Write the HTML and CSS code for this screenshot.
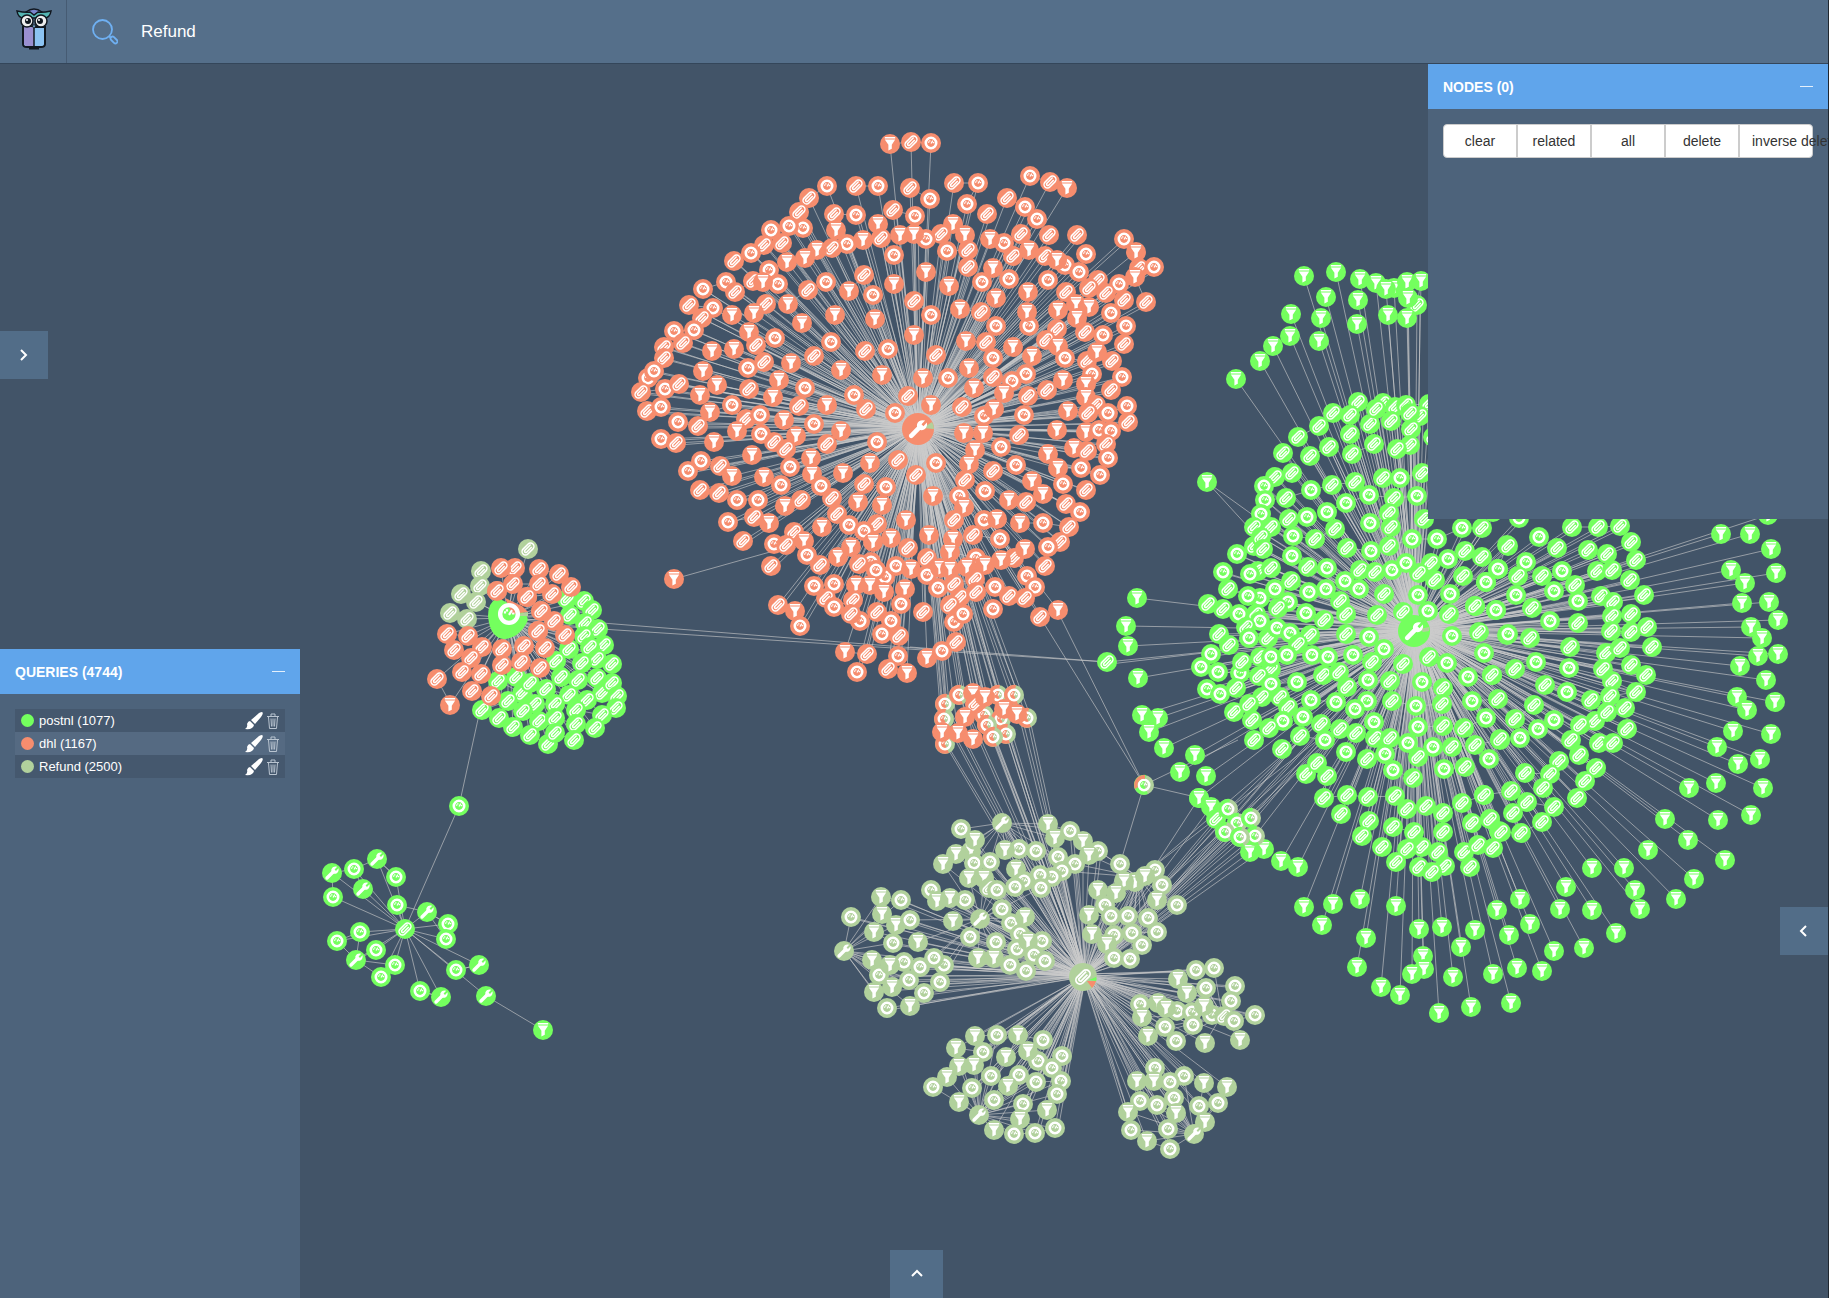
FILE: index.html
```html
<!DOCTYPE html>
<html lang="en">
<head>
<meta charset="utf-8">
<title>Graph explorer</title>
<link rel="stylesheet" href="styles.css">
</head>
<body>
<div class="app">
  <header class="topbar">
    <a class="logo" href="#" aria-label="Home">
      <svg width="36" height="42" viewBox="0 0 36 42" aria-hidden="true">
        <path d="M10 4Q18-2 26 4L18 8Z" fill="#7b86cf" stroke="#111820" stroke-width="1.5"/>
        <path d="M7 19V36Q7 39 11 39H25Q29 39 29 36V19Z" fill="#8cc3f2" stroke="#111820" stroke-width="2"/>
        <path d="M8 19V35Q8 38 11 38H18V19Z" fill="#9a8fd0"/>
        <path d="M1 3Q10 5 14 4L18 7L22 4Q26 5 35 3Q34 10 28 10H8Q2 10 1 3Z" fill="#55b5b3" stroke="#111820" stroke-width="1.5"/>
        <path d="M13 40H23" stroke="#111820" stroke-width="3"/>
        <circle cx="11" cy="13" r="6" fill="#eee" stroke="#111820" stroke-width="1.5"/>
        <circle cx="25" cy="13" r="6" fill="#eee" stroke="#111820" stroke-width="1.5"/>
        <circle cx="12" cy="13" r="3" fill="#111820"/><circle cx="24" cy="13" r="3" fill="#111820"/>
        <circle cx="11" cy="12" r="1" fill="#fff"/><circle cx="23" cy="12" r="1" fill="#fff"/>
        <path d="M16 17L18 21L20 17Z" fill="#8cc3f2" stroke="#111820"/>
        <path d="M18 21V39" stroke="#111820" stroke-width="1.5"/>
      </svg>
    </a>
    <form class="search">
      <label for="q" class="search-icon" aria-label="Search">
        <svg width="26" height="26" viewBox="0 0 26 26" fill="none" stroke="#6fb0f2" aria-hidden="true">
          <circle cx="10.500" cy="10.500" r="9.500" stroke-width="1.800"/>
          <path d="M17 17L19 19" stroke-width="2"/>
          <rect x="18" y="19" width="8" height="4" rx="2" transform="rotate(45 22 21)" stroke-width="1.800"/>
        </svg>
      </label>
      <input id="q" class="search-input" type="text" value="Refund">
    </form>
  </header>

  <main class="stage">
    <svg class="graph" id="graph" role="img" aria-label="Relation graph">
      <defs>
        <symbol id="f" viewBox="-10 -10 20 20"><path d="M-5.200-7H5.200V-5.400H-5.200ZM-5.200-4.600H5.200L1.800.800V4.800L-1.600 6.500V.800Z" fill="#fff"/></symbol>
        <symbol id="c" viewBox="-10 -10 20 20"><g transform="rotate(-45)" fill="none" stroke="#fff" stroke-width="1.500"><rect x="-7" y="-3.400" width="14" height="6.800" rx="3.400"/><path d="M5-1.300H-3.600Q-5.200 0-3.600 1.300H4"/></g></symbol>
        <symbol id="g" viewBox="-10 -10 20 20"><circle r="5.200" fill="none" stroke="#fff" stroke-width="2.600"/><path d="M-3-.900h1.300M-1.200-2.800v1.300M1.800-2.300L0 .500M3.200-.300h-1.400" stroke="#fff" stroke-width="1.300" fill="none"/></symbol>
        <symbol id="w" viewBox="-10 -10 20 20"><path d="M-5 5L1.500-1.500" stroke="#fff" stroke-width="3.400" stroke-linecap="round"/><path d="M5.200-6.200L2.600-3.500L4-2L6.500-4.700Q7.200-1.500 4.800.200Q2.500 1.500.500.200L-.600-1.200Q-1.400-4 .800-5.700Q2.800-7 5.200-6.200Z" fill="#fff"/></symbol>
      </defs>
      <g id="links" class="links"></g>
      <g id="nodes"></g>
    </svg>

    <button class="tab tab-left" type="button" aria-label="Open left panel"><svg width="12" height="12" viewBox="0 0 12 12"><path d="M3 1L8 6L3 11"/></svg></button>
    <button class="tab tab-right" type="button" aria-label="Open right panel"><svg width="12" height="12" viewBox="0 0 12 12"><path d="M8 1L3 6L8 11"/></svg></button>
    <button class="tab tab-bottom" type="button" aria-label="Open bottom panel"><svg width="12" height="12" viewBox="0 0 12 12"><path d="M1 8L6 3L11 8"/></svg></button>

    <section class="panel panel-nodes">
      <div class="panel-head"><h2>NODES (0)</h2><button class="fold" type="button" aria-label="Minimize nodes"></button></div>
      <div class="panel-body">
        <div class="btn-group">
          <button type="button">clear</button><button type="button">related</button><button type="button">all</button><button type="button">delete</button><button type="button">inverse delete</button>
        </div>
      </div>
    </section>

    <section class="panel panel-queries">
      <div class="panel-head"><h2>QUERIES (4744)</h2><button class="fold" type="button" aria-label="Minimize queries"></button></div>
      <div class="panel-body">
        <ul class="queries" id="queries">
          <li><span class="dot green"></span><span class="name">postnl (1077)</span>
            <button type="button" aria-label="Colour"><svg width="18" height="18" viewBox="0 0 18 18"><path d="M17 0Q19 1 16 5L10 12L6 8L14 1Q16 0 17 0ZM5 9L9 13Q8 18 0 17Q3 15 2 12Q3 9 5 9Z" fill="#fff"/></svg></button>
            <button type="button" aria-label="Delete"><svg width="12" height="16" viewBox="0 0 12 16" fill="none" stroke="#b9c4d0"><path d="M0 3.500H12M4 3V1H8V3M1.500 4L2.500 15.500H9.500L10.500 4M4 5.500L4.500 13.500M6 5.500V13.500M8 5.500L7.500 13.500"/></svg></button></li>
          <li><span class="dot orange"></span><span class="name">dhl (1167)</span>
            <button type="button" aria-label="Colour"><svg width="18" height="18" viewBox="0 0 18 18"><path d="M17 0Q19 1 16 5L10 12L6 8L14 1Q16 0 17 0ZM5 9L9 13Q8 18 0 17Q3 15 2 12Q3 9 5 9Z" fill="#fff"/></svg></button>
            <button type="button" aria-label="Delete"><svg width="12" height="16" viewBox="0 0 12 16" fill="none" stroke="#b9c4d0"><path d="M0 3.500H12M4 3V1H8V3M1.500 4L2.500 15.500H9.500L10.500 4M4 5.500L4.500 13.500M6 5.500V13.500M8 5.500L7.500 13.500"/></svg></button></li>
          <li><span class="dot pale"></span><span class="name">Refund (2500)</span>
            <button type="button" aria-label="Colour"><svg width="18" height="18" viewBox="0 0 18 18"><path d="M17 0Q19 1 16 5L10 12L6 8L14 1Q16 0 17 0ZM5 9L9 13Q8 18 0 17Q3 15 2 12Q3 9 5 9Z" fill="#fff"/></svg></button>
            <button type="button" aria-label="Delete"><svg width="12" height="16" viewBox="0 0 12 16" fill="none" stroke="#b9c4d0"><path d="M0 3.500H12M4 3V1H8V3M1.500 4L2.500 15.500H9.500L10.500 4M4 5.500L4.500 13.500M6 5.500V13.500M8 5.500L7.500 13.500"/></svg></button></li>
        </ul>
      </div>
    </section>
  </main>
</div>
<script src="graph.js"></script>
</body>
</html>
```
FILE: styles.css
```css
* { box-sizing: border-box; }
body {
  margin: 0;
  font-family: "Liberation Sans", Arial, sans-serif;
  color: #fff;
  background: #425468;
}
button { font: inherit; color: inherit; border: 0; padding: 0; background: none; cursor: pointer; }
.app { display: flex; flex-direction: column; height: 100vh; border-right: 1px solid #20272f; }

.topbar {
  display: flex;
  height: 64px;
  flex: none;
  background: #556f8a;
  border-bottom: 1px solid #34465a;
}
.logo { display: flex; width: 67px; padding: 8px 0 0 16px; border-right: 1px solid #465b73; }
.search { display: flex; flex: 1; align-items: center; padding-left: 25px; }
.search-icon { display: flex; width: 49px; }
.search-input {
  flex: 1;
  height: 40px;
  padding: 0;
  border: 0;
  outline: 0;
  background: none;
  color: #fff;
  font: 17px "Liberation Sans", Arial, sans-serif;
}

.stage { position: relative; flex: 1; min-height: 0; overflow: hidden; }
.graph { position: absolute; inset: 0; width: 100%; height: 100%; }
.links { stroke: #ccc; stroke-opacity: .62; fill: none; }
.graph .green { color: #74ff5e; }
.graph .orange { color: #f68d6e; }
.graph .pale { color: #b1d19c; }

.tab {
  position: absolute;
  display: flex;
  align-items: center;
  justify-content: center;
  width: 48px;
  height: 48px;
  background: #526d88;
}
.tab svg { fill: none; stroke: #fff; stroke-width: 2; }
.tab-left { left: 0; top: 267px; }
.tab-right { right: 0; top: 843px; }
.tab-bottom { left: calc(50% - 24px); bottom: 0; width: 53px; }

.panel { position: absolute; background: #4d637b; overflow: hidden; }
.panel-nodes { top: 0; right: 0; width: 400px; height: 455px; }
.panel-queries { left: 0; bottom: 0; width: 300px; height: 649px; }
.panel-head {
  display: flex;
  align-items: center;
  justify-content: space-between;
  height: 45px;
  padding: 0 15px;
  background: #60a5eb;
}
.panel-head h2 { margin: 0; font-size: 14px; line-height: 20px; }
.fold { width: 13px; height: 13px; background: linear-gradient(#e4f0fc, #e4f0fc) center / 13px 1px no-repeat; }
.panel-body { padding: 15px; }

.btn-group { display: flex; height: 34px; border: 1px solid #ccc; border-radius: 4px; background: #fff; }
.btn-group button {
  flex: 1 1 0;
  min-width: 0;
  padding: 0 12px;
  color: #333;
  font-size: 14px;
  white-space: nowrap;
}
.btn-group button + button { border-left: 2px solid #ccc; }

.queries { margin: 0; padding: 0; list-style: none; font-size: 13px; }
.queries li { display: flex; align-items: center; height: 23px; padding: 0 6px; background: #45586e; }
.queries li:nth-child(even) { background: #556a82; }
.queries button { display: flex; margin-left: 4px; }
.name { flex: 1; }
.dot { width: 13px; height: 13px; margin-right: 5px; border-radius: 50%; }
.dot.green { background: #74ff5e; }
.dot.orange { background: #f68d6e; }
.dot.pale { background: #b1d19c; }
```
FILE: graph.js
```js
// Each group: colour, hub [x, y], origin [x, y], units per pixel [x, y], node list.
// A node is a letter for its icon (f funnel, c clip, g gauge, w wrench) and its place.
const TOP = 64;
const HUBS = { dhl: [918, 429], postnl: [1414, 631], refund: [1083, 977], mixed: [508, 618] };

const groups = [
  ['orange', HUBS.dhl, [620, 120], [2.8, 3], `
f757,73 c815,66 g872,69 g1147,167 c1205,185 f1252,204 g579,199 c530,233 c660,199 g721,199 c812,204 g867,236 c935,189 g1002,188 g971,252 c1083,234 g1135,262 g1167,297 c1027,282 c501,276 c599,281 g661,285 c763,269 g826,287 g424,331 g513,323 g474,318 f605,330 f722,311 f933,313 c898,342 c403,374 c453,369 g636,371 c594,383 f551,390 f679,359 c731,353 g856,356 f785,345 f824,341 f965,346 c1122,341 c1200,344 c1280,345 g1411,356 g1306,402 f1446,396 c318,423 g366,398 g417,450 f468,426 f517,413 g768,405 g915,393 c973,389 g1076,368 f1036,357 c1101,407 f1144,389 c1190,407 g1246,435 f1223,421 g1285,455 c1452,443 g1495,442 f1441,470 c1473,547 g231,506 g297,485 c322,517 c372,482 g441,493 f401,485 c192,556 g260,565 c230,595 f314,585 c409,552 f375,579 f470,552 c525,511 g578,485 f640,513 c682,464 g707,524 f768,491 f858,457 c973,441 f922,497 g1014,486 f1045,443 g1090,477 g1198,479 f1143,517 f1054,535 c1249,515 c1337,480 c1314,505 g1398,491 c1360,520 c1411,539 f1277,551 f1312,560 f1225,569 f1280,595 g1376,580 g1416,617 g151,632 g207,629 c124,680 c175,669 f361,636 f257,692 f320,688 g433,655 c381,675 f509,610 f601,585 f715,598 c823,544 g870,586 f953,567 c1010,577 g1054,617 g1146,619 f1140,577 c1223,627 c1301,636 g1351,644 c1194,660 f1227,679 c1412,672 c123,714 g79,775 g95,752 f231,753 g359,743 c402,726 f479,729 c543,707 g591,665 c685,694 g749,686 f823,646 c886,705 f969,664 c1024,667 g1043,713 f1101,681 f1153,709 g1245,713 c1307,722 f1336,696 c1377,723 c58,815 g126,806 c164,792 f272,795 f225,826 c361,807 f446,780 f427,831 g518,805 f619,749 f733,765 f849,773 g919,773 f976,744 c1045,772 f991,803 g1138,762 g1098,782 f1075,820 c1141,829 c1195,811 f1240,781 g1322,763 f1305,792 g1405,772 c1376,811 f1305,832 c76,872 g115,860 f253,876 g313,854 c500,858 f580,856 g655,824 c690,868 g769,878 c805,827 f872,856 c957,861 g1018,888 f1048,866 g1131,886 f1255,873 c1334,855 c1309,880 g1367,878 g1420,857`],
  ['orange', HUBS.dhl, [620, 400], [2.8, 3], `
g162,66 c217,78 c353,57 g391,44 f460,60 g542,71 f328,94 f620,92 f494,108 g396,101 c431,127 c466,148 c580,133 g719,126 g116,116 c158,129 f263,125 f370,165 f536,173 g477,201 c279,197 g227,184 g189,212 f313,229 f402,232 f537,223 f623,219 f700,190 c779,181 c828,224 g885,188 f964,99 f1015,98 g1066,141 c1118,105 f994,151 f977,191 c965,240 c1045,212 g1109,194 f1223,89 f1199,162 f1304,95 g1341,90 g1376,92 c1421,67 c1360,131 f1270,145 c1307,154 g1365,174 f1226,204 g1290,204 g1344,226 f1154,242 g1240,251 f1184,281 c1305,270 g1022,272 c225,271 c277,278 g327,299 g387,301 g452,255 g564,257 c506,299 f462,319 c594,294 c682,252 g746,261 f665,306 f733,316 f877,287 g950,289 f963,320 f1088,299 c1138,307 c1249,311 g1289,335 g301,366 c375,352 f416,369 c343,423 c608,341 g641,375 f566,382 c719,373 g682,394 f801,360 c935,361 g1018,361 f1056,358 f1119,368 g1183,369 c1256,381 c488,395 g432,432 c464,436 f515,424 c424,499 g523,465 c561,496 f609,471 f647,441 f707,427 f759,415 c807,444 f866,405 f932,418 c989,406 g1065,416 c860,473 f924,457 g997,473 c1103,475 f1133,448 c1232,427 g1197,442 c1191,497 g703,487 c669,493 g743,531 g717,510 g773,499 f816,507 g860,524 f897,503 f925,508 f972,500 f1021,494 f1066,480 g1140,528 g1162,560 g543,558 g600,551 f662,556 f699,555 f740,576 f799,568 g891,564 c934,553 c994,538 c952,590 c998,577 g1050,560 c1090,587 c1133,593 c577,593 g600,621 c652,600 g786,613 c924,615 g1043,627 c847,635 c719,637 g672,663 c647,643 g758,662 g935,665 g961,641 c441,616 f491,632 g503,678 c1175,652 f1225,630 g733,701 c782,707 f630,757 c692,763 g777,768 g664,816 c751,808 f803,818 f860,773 c941,727 g902,752`],
  ['orange', [770, 552], [620, 400], [2.8, 3], `f152,536`],
  ['green', HUBS.postnl, [1130, 250], [3, 3], `
f521,79 f618,65 f689,86 f589,141 f484,192 f572,203 f685,151 f681,221 f737,99 f792,113 f769,118 f831,97 f874,93 c862,164 f835,143 f774,196 f831,203 f481,257 f567,272 f428,287 f390,333 f319,387 f232,695 c685,455 c610,488 c661,496 c758,459 c795,470 c828,465 c896,463 c870,497 c720,523 c739,478 c784,514 c843,538 c839,490 c566,529 c503,560 c660,551 c458,610 c598,592 c540,619 c667,611 c731,581 c840,586 c800,598 c909,560 c435,682 c486,668 g401,707 g406,749 c469,745 g543,721 c606,704 c675,697 c760,683 g810,685 c876,668 g860,738 c792,744 g716,735 g648,758 g592,786 g392,791 c477,808 g530,800 c371,832 c423,832 g490,857 c555,868 c615,837 c777,790 g719,818 c784,832 c882,806 c372,889 c393,862 c398,898 g322,911 g486,919 c652,895 g723,902 c777,888 g846,866 g920,866 g997,833 c1057,834 g279,967 c385,964 g360,973 c424,955 c533,951 g591,955 c484,992 g435,1016 c294,1018 g645,993 c690,961 c734,965 g786,959 g828,939 c903,940 c867,969 g955,926 c1005,903 c1055,920 c914,989 c1000,977 g1067,996 g1104,956 c1130,886 g688,1016 g589,1017 g538,1025 c630,1052 c761,1033 g863,1034 g961,1031 g389,1043 g355,1037 c234,1061 c279,1078 g475,1056 c377,1093 g327,1091 c444,1075 g527,1090 c582,1109 c648,1093 c741,1095 c818,1085 g895,1084 c956,1091 c1035,1069 g1099,1080`],
  ['green', HUBS.postnl, [1130, 500], [3, 3], `
c267,401 g390,363 c347,380 g358,415 c296,434 c414,414 g440,385 g480,400 c540,406 c505,433 g242,462 c649,402 g718,410 g763,446 g966,407 c1048,396 g1130,405 g1061,459 g214,500 g263,516 g330,518 c335,486 c390,470 c424,508 g423,470 g470,465 g545,466 g594,470 g669,466 c726,485 c820,493 c896,470 g952,489 g1014,532 c1085,525 g231,566 g271,581 c318,565 c386,528 g423,552 g502,546 c580,526 c628,515 c650,562 g715,540 c779,542 g877,546 c939,563 c313,637 c395,591 c358,611 c451,592 c473,622 g543,600 g617,605 g712,602 g676,627 c786,604 g858,618 c935,612 g1027,604 c1103,596 c365,661 g460,664 c416,685 c373,720 g519,650 c573,673 c629,688 c677,698 g733,667 g864,681 c940,677 c1002,684 g1067,655 c509,709 g584,719 c457,746 g649,757 c735,715 c779,714 c710,777 g766,762 g834,729 c864,771 g910,740 c967,742 c1035,735 c1111,719 g1077,776 g788,811 c850,834 g943,806 c1006,801 c529,821 c562,790 c591,829 c581,893 c650,886 c714,892 c795,889 c634,941 c717,963 c695,1007 c831,928 c887,917 c939,939 c996,910 c1061,885 c789,982 c851,996 c939,995 c1027,969 c1079,958 c1108,994 c756,1042 c875,1042 c831,1048 c924,1057 c799,1085 c1001,1057 c1044,1034 c1089,1044 c945,1097 c866,1102 c905,1115 c1020,1100
f20,293 f-12,378 f-6,439 f23,533 f36,645 f83,655 f58,696 f101,744 f196,765 f149,817 f227,827 f208,893`],
  ['green', HUBS.postnl, [1430, 500], [3, 2.904], `
g268,52 c190,35 c427,79 c505,79 c569,75 c603,123 g326,107 c235,133 c382,140 c474,146 c530,156 c617,173 g288,180 g205,200 g168,238 c265,222 c336,221 g397,205 c436,246 g257,277 g373,265 c502,207 c545,203 c599,232 c643,275 c135,309 g199,319 c306,314 g443,293 g359,351 c443,356 c514,279 c548,296 c547,337 c603,332 g234,390 c299,402 c544,380 c603,383 c650,369 c419,426 c527,443 c569,431 c667,426 c254,491 g317,469 g416,488 c185,509 c345,536 g410,559 c519,490 c604,478 c649,507 c547,526 c619,557 c541,568 c484,582 c311,594 c256,637 g324,666 g372,638 c586,604 c496,641 c531,615 c451,653 c590,666 c422,698 c508,705 c550,706 c447,740 g271,690 c211,695 c387,757 c499,778 c466,815 c285,793 c359,797 c339,835 c441,865 c242,845 c163,857 c291,877 c373,892 c248,909 c336,935 c273,966 c212,963 c179,927
f874,98 f960,99 f1014,45 f1022,141 f1039,213 f904,203 f946,241 f936,299 f1017,295 f1045,348 f962,369 f995,400 f1044,447 f985,452 f931,482 f1007,523 f1035,587 f920,572 f952,610 f910,670 f1024,679 f860,716 f925,766 f991,751 f858,821 f777,837 f1000,835 f963,914 f865,930 f705,926 f774,987 f886,1045 f654,1015 f791,1100 f583,1068 f485,1069 f615,1134 f631,1187 f738,1158 f409,1124 f389,1188 f486,1190 f557,1256 f463,1302 f373,1311 f271,1160 f200,1192 f299,1230 f237,1262 f135,1248 f36,1241 f94,1299 f260,1360 f336,1368 f189,1377 f70,1386 f242,1461 f122,1472 f27,1490`],
  ['green', HUBS.postnl, [0, 0], [1, 1], `
f1304,907 f1333,904 f1360,899 f1322,925 f1396,906 f1366,938 f1357,967 f1419,929 f1423,956 f1424,969 f1412,974 f1381,987 f1400,995 c1107,662`],
  ['green', HUBS.refund, [820, 780], [3, 3], `
f1138,53 f1173,80 c1187,118 f1290,216 f1331,208`],
  ['pale green', HUBS.refund, [820, 780], [3, 3], `
g1223,86 g1250,128 g1292,113 g1215,157 g1304,167 g1260,171`],
  ['green', HUBS.postnl, [1130, 500], [3, 3], `f454,1083 f505,1100`],
  ['pale', HUBS.refund, [820, 780], [3, 3], `
g423,147 f683,133 g751,153 f706,173 f789,182 g833,212 f453,213 f464,179 f407,221 f370,253 g463,249 g510,247 g596,206 f555,210 g647,212 g713,230 f806,226 g764,251 f587,267 g726,274 g697,292 g612,304 g659,284 f446,294 f493,293 c508,325 g532,331 g586,321 g663,324 g333,330 f350,363 g435,359 f391,355 f399,424 g545,386 g573,428 f616,410 g599,462 g450,472 g529,486 g592,506 g665,482 f623,484 f473,535 f522,533 g643,525 g674,542 g569,554 g619,573
f183,351 g243,359 f187,401 g94,410 f227,436 g271,419 f161,456 g218,488 f293,485 f155,541 g251,546 g176,586 f209,555 g299,560 g373,556 g341,534 g268,600 g359,605 f163,637 f217,622 g313,639 g202,684 f269,678
g899,251 g1004,271 f946,307 f974,289 f912,303 g1027,314 f835,330 f887,340 g855,376 f1011,360 g1070,374 f808,404 g873,407 g924,408 g984,414 f815,461 g883,466 g935,458 g1012,456 f861,492 g967,494 g881,535 g930,536
g1128,569 g1182,563 f1073,597 f1101,638 g1159,624 g1245,619 g1233,662 g960,672 g1070,692 f1014,668 f1037,685 f966,711 g1117,696 g1176,706 f1153,679 c1212,709 g1241,722 g1305,705 g1118,735 g1036,741 f985,768 g1068,782 f1154,788 f1260,781
g1004,863 f950,902 g1091,887 f1002,903 g1051,905 f1153,910 f1222,922 g960,963 g1061,953 g1011,976 g1137,977 g1194,969 f924,996 f1068,1000 g932,1050 g1044,1046 f1155,1026 f980,1083 g1051,1107
f464,767 g530,765 f594,765 g668,779 f408,803 g489,816 f558,831 g655,843 f623,813 g725,828 g696,863 f417,859 f461,856 f382,892 g513,887 g598,884 f565,918 g647,905 g723,902 g338,921 g455,923 g710,943 f416,965 g522,959 g608,971 f681,991 f601,1018 f521,1051 g581,1061 g646,1060 g704,1044`],
  ['pale orange', HUBS.refund, [620, 400], [2.8, 3], `
g910,913 g949,885 g1057,884 g1104,884 g908,957 g1140,954 g1020,945 g1067,958 g1027,976 g1081,1001 g1043,1011 g911,1032`],
  ['orange', HUBS.dhl, [620, 400], [2.8, 3], `
f987,880 c995,912 f1021,891 f1074,928 f1112,941 f965,950 f902,996 f945,998 f989,1016`],
  ['green', HUBS.mixed, [310, 520], [3, 3], `
c771,238 c821,242 c847,271 c780,284 c826,310 c864,328 c823,347 c883,376 c840,380 c862,416 c905,433 c778,388 c739,422 c817,430 c752,472 c804,479 c875,520 c861,475 c907,490 c921,527 c918,565 c618,470 c563,484 c635,518 c661,488 c709,508 c776,524 c832,541 c675,553 c735,551 c594,542 c516,569 c640,574 c799,571 c875,586 c568,595 c686,602 c735,593 c799,611 c854,624 c610,621 c660,645 c715,671 c736,640 c791,660`],
  ['pale', HUBS.mixed, [310, 520], [3, 3], `c653,86 c513,154 c511,199 c453,223 c498,247 c420,280 c470,296`],
  ['orange', HUBS.mixed, [310, 520], [3, 3], `
c615,145 c572,145 c686,146 c746,162 c610,193 c686,193 c783,202 c561,214 c726,222 c651,232 c692,273 c733,304 c685,333 c764,344 c412,343 c473,347 c432,390 c516,380 c484,415 c576,386 c641,379 c704,385 c575,434 c634,425 c690,445 c455,455 c514,461 c382,478 c486,512 c544,527 f419,555`],
  ['green', [405, 929], [310, 520], [3, 3], `
w65,1059 g131,1047 w202,1018 g257,1070 g68,1131 w159,1107 g260,1154 w350,1177 g414,1213 g409,1257 g149,1236 g81,1264 g198,1291 w138,1321 g255,1334 g214,1370 g329,1412 w393,1432 w506,1336 g438,1351 w529,1429 g448,857 c284,1226`],
  ['green', [486, 996], [310, 520], [3, 3], `f700,1529`],
  ['pale', [1083, 977], [820, 780], [3, 3], `w547,128 w481,417 w73,512 w477,1006 w1122,1062`]
];

// Extra links, in page coordinates: x1, y1, x2, y2.
const extraLinks = [
  [540, 618, 940, 650], [540, 625, 1107, 662], [910, 647, 1107, 662], [1040, 617, 1144, 785],
  [1057, 610, 1144, 785], [1144, 785, 1200, 798], [1144, 785, 1120, 864], [1144, 785, 1238, 740],
  [480, 710, 459, 806], [1207, 482, 1260, 540], [437, 679, 450, 703],
  [332, 873, 333, 897], [354, 869, 363, 889], [377, 859, 396, 877], [397, 905, 427, 912],
  [337, 941, 356, 960], [360, 932, 356, 960], [356, 960, 381, 977], [356, 960, 395, 965],
  [427, 912, 448, 924], [427, 912, 446, 939], [420, 991, 441, 997], [456, 970, 479, 965]
];

const SVG = 'http://www.w3.org/2000/svg';
const links = document.getElementById('links');
const nodes = document.getElementById('nodes');

function add(parent, tag, attrs) {
  const el = document.createElementNS(SVG, tag);
  for (const key in attrs) el.setAttribute(key, attrs[key]);
  parent.appendChild(el);
  return el;
}
function link(x1, y1, x2, y2) {
  add(links, 'path', { d: `M${x1} ${y1 - TOP}L${x2} ${y2 - TOP}` });
}
function node(kind, colour, x, y, r) {
  const [main, second] = colour.split(' ');
  const g = add(nodes, 'g', { class: main, transform: `translate(${x} ${y - TOP})` });
  add(g, 'circle', { r, fill: 'currentColor' });
  if (second) {
    add(g, 'path', { class: second, d: `M2 ${-r}A${r} ${r} 0 1 0 4 ${r - 1}L0 0Z`, fill: 'currentColor' });
  }
  const s = r > 10 ? r * 1.7 : 20;
  add(g, 'use', { href: '#' + kind, x: -s / 2, y: -s / 2, width: s, height: s });
  return g;
}

const petals = [[1002, 823], [980, 919], [844, 951], [979, 1115], [1194, 1134], [1138, 877], [1222, 1015]];

for (const [colour, hub, origin, unit, list] of groups) {
  let previous = null;
  for (const item of list.trim().split(/\s+/)) {
    const kind = item[0];
    const [a, b] = item.slice(1).split(',').map(Number);
    const x = Math.round(origin[0] + a / unit[0]);
    const y = Math.round(origin[1] + b / unit[1]);
    link(hub[0], hub[1], x, y);
    if ((hub === HUBS.dhl || hub === HUBS.postnl) && kind !== 'f' && y > 200) {
      link(hub[0] + 3, hub[1] - 3, x + 3, y + 2);
    }
    if (hub === HUBS.refund && kind === 'g') link(hub[0] + 3, hub[1] - 3, x + 3, y + 2);
    if (colour === 'pale orange') {
      link(HUBS.dhl[0], HUBS.dhl[1], x, y);
      link(HUBS.dhl[0] + 6, HUBS.dhl[1], x + 4, y);
    }
    if (colour === 'pale green') link(HUBS.postnl[0], HUBS.postnl[1], x, y);
    if (colour === 'pale' && hub === HUBS.refund) {
      const near = petals.slice().sort((p, q) => Math.hypot(p[0] - x, p[1] - y) - Math.hypot(q[0] - x, q[1] - y))[0];
      link(near[0], near[1], x, y);
    }
    if (previous && kind !== 'f' && Math.hypot(previous[0] - x, previous[1] - y) < 28) {
      link(previous[0], previous[1], x, y);
    }
    previous = [x, y];
    node(kind, colour, x, y, 10);
  }
}
for (const item of [[1149, 870], [1167, 881], [1156, 905], [1140, 928]]) {
  link(item[0], item[1], 1370, 700);
  link(item[0], item[1], 1300, 740);
}
for (const l of extraLinks) link(...l);

function slice(g, colour, d) {
  add(g, 'path', { class: colour, d, fill: 'currentColor' });
  g.appendChild(g.querySelector('use'));
}
slice(node('w', 'orange', 918, 429, 16), 'pale', 'M5-1L14-7Q16-4 16 0Z');
slice(node('w', 'green', 1414, 631, 16), 'pale', 'M6-2L15-4V0L9 1Z');
const refundHub = node('c', 'pale', 1083, 977, 14);
add(refundHub, 'path', { class: 'green', d: 'M6 3L13 0Q14 2 13 4Z', fill: 'currentColor' });
add(refundHub, 'path', { class: 'orange', d: 'M4 4L13 4Q12 8 9 11Z', fill: 'currentColor' });
const both = node('g', 'pale green', 1144, 785, 10);
add(both, 'path', { class: 'orange', d: 'M1-10A10 10 0 0 0-9 4L-6 2A6 6 0 0 1 1-6Z', fill: 'currentColor' });

// The mixed hub sits below the orange clips that surround it.
const mixed = add(nodes, 'g', { class: 'green', transform: `translate(508 ${618 - TOP})` });
add(mixed, 'path', { d: 'M-10-20Q-20-16-20-2Q-18 20-4 21Q12 20 20 2L18-4L2-14Z', fill: 'currentColor' });
add(mixed, 'path', { class: 'orange', d: 'M-3-20L14-12L20-6L4-4Z', fill: 'currentColor' });
add(mixed, 'path', { class: 'pale', d: 'M10-4L20-6V-2H10Z', fill: 'currentColor' });
add(mixed, 'use', { href: '#g', x: -16, y: -21, width: 34, height: 34 });
for (const [x, y] of [[497, 591], [527, 597], [541, 611], [538, 631]]) node('c', 'orange', x, y, 10);
```
